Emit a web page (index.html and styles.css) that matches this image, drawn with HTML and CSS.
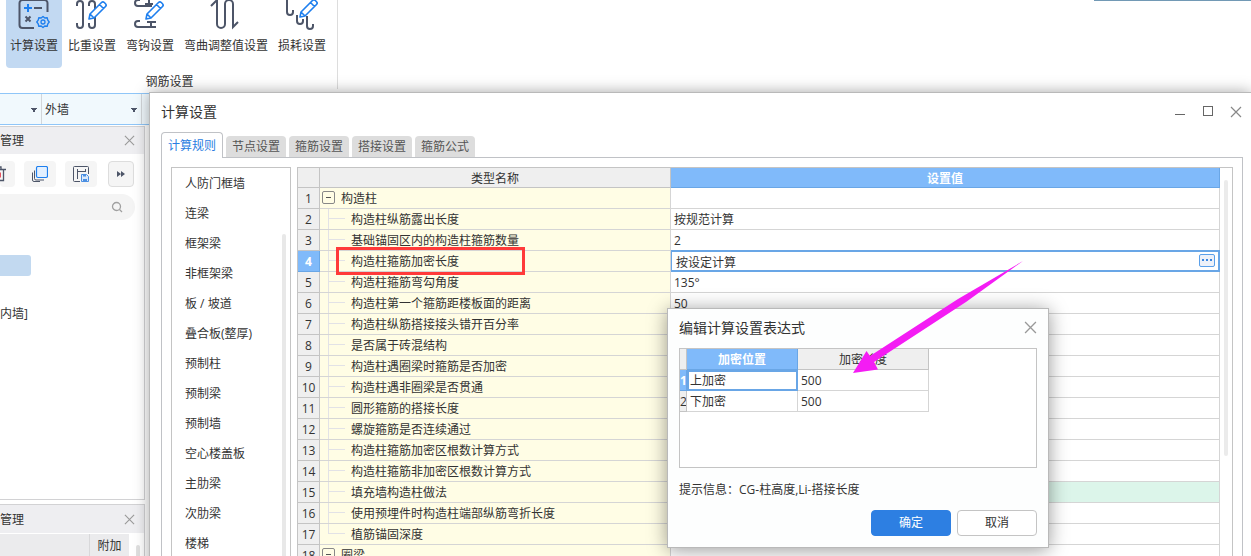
FILE: index.html
```html
<!DOCTYPE html>
<html lang="zh-CN">
<head>
<meta charset="utf-8">
<title>计算设置</title>
<link rel="stylesheet" href="styles.css">
</head>
<body>
<svg class="defs" aria-hidden="true">
  <symbol id="pencil" viewBox="0 0 32 32">
    <path d="M13 21l1-5L25.500 4.500a2 2 0 0 1 2.800 0l1.200 1.200a2 2 0 0 1 0 2.800L18 20zM23.500 6.500l4 4M14 16l4 4" fill="#fff" stroke="#1e7fee" stroke-width="1.600" stroke-linejoin="round"/>
  </symbol>
  <symbol id="close" viewBox="0 0 12 12">
    <path d="M1 1l10 10M11 1L1 11" fill="none" stroke="currentColor" stroke-width="1.200"/>
  </symbol>
</svg>
<div class="app">
  <header class="ribbon">
    <section class="group">
      <div class="tools">
        <button class="tool active"><svg class="tool-icon" viewBox="0 0 32 32"><path d="M29.500 14V5a3 3 0 0 0-3-3h-22a3 3 0 0 0-3 3v22a3 3 0 0 0 3 3H16" fill="none" stroke="#4d5568" stroke-width="2"/><path d="M6 10h8M10 6v8" stroke="#1e7fee" stroke-width="2"/><path d="M16 10h8M7.500 18.500l5 5M12.500 18.500l-5 5" stroke="#4d5568" stroke-width="2"/><path d="M25 18.500l1.800 1.500 2.400-.2.600 2.300 1.400 1.900-1.400 1.900-.6 2.300-2.400-.2-1.800 1.500-1.800-1.500-2.400.2-.6-2.300-1.400-1.900 1.400-1.900.6-2.300 2.400.2z" fill="none" stroke="#1e7fee" stroke-width="1.400" stroke-linejoin="round"/><circle cx="25" cy="24" r="2" fill="none" stroke="#1e7fee" stroke-width="1.300"/></svg><span>计算设置</span></button>
        <button class="tool"><svg class="tool-icon" viewBox="0 0 32 32"><path d="M1 8V6a3 3 0 0 1 6 0v21a3 3 0 0 1-6 0v-2M13 8V6a3 3 0 0 1 6 0v21a3 3 0 0 1-6 0v-2" fill="none" stroke="#4d5568" stroke-width="2"/><use href="#pencil"/></svg><span>比重设置</span></button>
        <button class="tool"><svg class="tool-icon" viewBox="0 0 32 32"><path d="M6 2H4a3 3 0 0 0 0 6h14M15 0v8M11 6h8M6 23H4a3 3 0 0 0 0 6h18M17 24v5M13 24h9" fill="none" stroke="#4d5568" stroke-width="2"/><use href="#pencil" x="-1"/></svg><span>弯钩设置</span></button>
        <button class="tool"><svg class="tool-icon" viewBox="0 0 32 32"><path d="M1 8l6-6v24a4 4 0 0 0 8 0V6a4 4 0 0 1 8 0v23l5-5" fill="none" stroke="#4d5568" stroke-width="2"/></svg><span>弯曲调整值设置</span></button>
        <button class="tool"><svg class="tool-icon" viewBox="0 0 32 32"><path d="M1 1v13a3 3 0 0 0 6 0v-2M11 17v6a3 3 0 0 0 6 0v-2M21 18v10a3 3 0 0 0 6 0v-2" fill="none" stroke="#4d5568" stroke-width="2"/><use href="#pencil" x="1" y="-2"/></svg><span>损耗设置</span></button>
      </div>
      <div class="group-name">钢筋设置</div>
    </section>
    <div class="top-line"></div>
  </header>

  <div class="context-bar">
    <select class="combo narrow" aria-label="构件类型"><option></option></select>
    <select class="combo" aria-label="墙类型"><option>外墙</option></select>
  </div>

  <aside class="dock">
    <section class="pane grow">
      <header class="pane-head"><h2>管理</h2><button class="icon-btn" aria-label="关闭"><svg class="x-small"><use href="#close"/></svg></button></header>
      <div class="pane-tools">
        <button class="chip first" aria-label="删除"><svg class="chip-icon" viewBox="0 0 16 16"><path d="M0 3.500h16M5 3V1h6v2M2.500 4v10.500h11V4" fill="none" stroke="#4d5568" stroke-width="1.300"/><path d="M6.500 6.500v5M10 6.500v5" stroke="#e02030" stroke-width="1.500"/></svg></button>
        <button class="chip" aria-label="复制"><svg class="chip-icon" viewBox="0 0 16 16"><path d="M2.500 4.500v8a1.500 1.500 0 0 0 1.500 1.500h8M.5 6.500V14a1.500 1.500 0 0 0 1.500 1.500h6" fill="none" stroke="#4d5568"/><rect x="4.500" y=".5" width="11" height="11" rx="1.500" fill="#e3f0ff" stroke="#1e7fee" stroke-width="1.200"/></svg></button>
        <button class="chip" aria-label="存档"><svg class="chip-icon" viewBox="0 0 16 16"><path d="M7 15.500H1.500a1 1 0 0 1-1-1v-13a1 1 0 0 1 1-1h13a1 1 0 0 1 1 1V8M4.500 3v10M4.500 5.500h8M12.500 3v3" fill="none" stroke="#4d5568"/><path d="M8.500 8.500h5l2 2v5h-7z" fill="#dbe9fb" stroke="#4b8fe2"/><path d="M10 8.500h3v2h-3zM10 13h4v2h-4z" fill="#4b8fe2"/></svg></button>
        <button class="chip more" aria-label="更多"><svg class="more-icon" viewBox="0 0 8 6"><path d="M0 0l4 3-4 3zM4 0l4 3-4 3z" fill="#4d5568"/></svg></button>
      </div>
      <div class="search"><input type="search" aria-label="搜索"><svg class="search-icon" viewBox="0 0 12 12"><circle cx="5.500" cy="5.500" r="4" fill="none" stroke="#a0a0a0" stroke-width="1.300"/><path d="M8.500 8.500l2.500 2.500" stroke="#a0a0a0" stroke-width="1.300"/></svg></div>
      <div class="picked"></div>
      <div class="node">内墙]</div>
    </section>
    <section class="pane second">
      <header class="pane-head"><h2>管理</h2><button class="icon-btn" aria-label="关闭"><svg class="x-small"><use href="#close"/></svg></button></header>
      <div class="columns"><span class="col-blank"></span><span class="col-extra">附加</span><span class="mini-bar"></span></div>
    </section>
  </aside>

  <div class="dialog" role="dialog" aria-labelledby="dlg-title">
    <header class="dialog-head">
      <h1 id="dlg-title">计算设置</h1>
      <button class="win-btn" aria-label="最小化"><svg class="win-icon" viewBox="0 0 12 12"><path d="M1 8.500h10" stroke="#666"/></svg></button>
      <button class="win-btn" aria-label="最大化"><svg class="win-icon" viewBox="0 0 12 12"><rect x="1.500" y=".5" width="9" height="9" fill="none" stroke="#666"/></svg></button>
      <button class="win-btn" aria-label="关闭"><svg class="win-icon"><use href="#close"/></svg></button>
    </header>
    <nav class="tabs">
      <button class="tab current">计算规则</button>
      <button class="tab">节点设置</button>
      <button class="tab">箍筋设置</button>
      <button class="tab">搭接设置</button>
      <button class="tab">箍筋公式</button>
    </nav>
    <div class="sheet">
      <div class="kinds">
        <ul>
          <li>人防门框墙</li><li>连梁</li><li>框架梁</li><li>非框架梁</li><li>板 / 坡道</li><li>叠合板(整厚)</li><li>预制柱</li><li>预制梁</li><li>预制墙</li><li>空心楼盖板</li><li>主肋梁</li><li>次肋梁</li><li>楼梯</li>
        </ul>
        <div class="kinds-bar"></div>
      </div>
      <div class="grid-frame">
        <table class="rules">
          <colgroup><col class="c-no"><col class="c-name"><col></colgroup>
          <thead><tr><th></th><th>类型名称</th><th class="picked-col">设置值</th></tr></thead>
          <tbody>
            <tr><th>1</th><td class="name"><div class="top"><button class="fold" aria-label="折叠"></button>构造柱</div></td><td></td></tr>
            <tr><th>2</th><td class="name"><div class="leaf">构造柱纵筋露出长度</div></td><td>按规范计算</td></tr>
            <tr><th>3</th><td class="name"><div class="leaf">基础锚固区内的构造柱箍筋数量</div></td><td>2</td></tr>
            <tr class="active-row"><th>4</th><td class="name"><div class="leaf">构造柱箍筋加密长度</div><div class="mark"></div></td><td class="edit"><div class="editor"><input type="text" value="按设定计算" aria-label="设置值"><button class="dots" aria-label="编辑"><i></i><i></i><i></i></button></div></td></tr>
            <tr><th>5</th><td class="name"><div class="leaf">构造柱箍筋弯勾角度</div></td><td>135°</td></tr>
            <tr><th>6</th><td class="name"><div class="leaf">构造柱第一个箍筋距楼板面的距离</div></td><td>50</td></tr>
            <tr><th>7</th><td class="name"><div class="leaf">构造柱纵筋搭接接头错开百分率</div></td><td></td></tr>
            <tr><th>8</th><td class="name"><div class="leaf">是否属于砖混结构</div></td><td></td></tr>
            <tr><th>9</th><td class="name"><div class="leaf">构造柱遇圈梁时箍筋是否加密</div></td><td></td></tr>
            <tr><th>10</th><td class="name"><div class="leaf">构造柱遇非圈梁是否贯通</div></td><td></td></tr>
            <tr><th>11</th><td class="name"><div class="leaf">圆形箍筋的搭接长度</div></td><td></td></tr>
            <tr><th>12</th><td class="name"><div class="leaf">螺旋箍筋是否连续通过</div></td><td></td></tr>
            <tr><th>13</th><td class="name"><div class="leaf">构造柱箍筋加密区根数计算方式</div></td><td></td></tr>
            <tr><th>14</th><td class="name"><div class="leaf">构造柱箍筋非加密区根数计算方式</div></td><td></td></tr>
            <tr><th>15</th><td class="name"><div class="leaf">填充墙构造柱做法</div></td><td class="green"></td></tr>
            <tr><th>16</th><td class="name"><div class="leaf">使用预埋件时构造柱端部纵筋弯折长度</div></td><td></td></tr>
            <tr><th>17</th><td class="name"><div class="leaf last">植筋锚固深度</div></td><td></td></tr>
            <tr><th>18</th><td class="name"><div class="top"><button class="fold" aria-label="折叠"></button>圈梁</div></td><td></td></tr>
          </tbody>
        </table>
        <div class="grid-bar"></div>
      </div>
    </div>
  </div>

  <div class="modal" role="dialog" aria-labelledby="modal-title">
    <header class="modal-head"><h2 id="modal-title">编辑计算设置表达式</h2><button class="icon-btn" aria-label="关闭"><svg class="x-big"><use href="#close"/></svg></button></header>
    <div class="expr-frame">
      <table class="expr">
        <colgroup><col class="e-no"><col class="e-pos"><col class="e-len"></colgroup>
        <thead><tr><th></th><th class="picked-col">加密位置</th><th>加密长度</th></tr></thead>
        <tbody>
          <tr class="active-row"><th>1</th><td class="focus">上加密</td><td>500</td></tr>
          <tr><th>2</th><td>下加密</td><td>500</td></tr>
        </tbody>
      </table>
    </div>
    <p class="hint">提示信息：CG-柱高度,Li-搭接长度</p>
    <div class="actions"><button class="btn primary">确定</button><button class="btn">取消</button></div>
  </div>

  <svg class="arrow" viewBox="0 0 170 112" aria-hidden="true"><path d="M170 0L105 38 17 95 13.500 90 0 112l25-3.500-4-7.500 92-60z" fill="#f41cf4"/></svg>
</div>
</body>
</html>
```
FILE: styles.css
```css
* { box-sizing: border-box; }
body {
  margin: 0;
  font: 12px/18px "Open Sans", "Noto Sans CJK SC", sans-serif;
  color: #333;
  background: #fff;
}
button, input, select { font: inherit; color: inherit; margin: 0; }
button { padding: 0; border: 0; background: none; }
h1, h2, p, ul { margin: 0; padding: 0; font-size: 12px; font-weight: 400; }
ul { list-style: none; }
.defs { position: absolute; width: 0; height: 0; }
.app {
  position: relative;
  height: 100vh;
  overflow: hidden;
  display: flex;
  flex-direction: column;
}

/* Ribbon */
.ribbon {
  flex: none;
  height: 93px;
  display: flex;
  justify-content: space-between;
  align-items: flex-start;
}
.group {
  height: 89px;
  width: 338px;
  padding-left: 6px;
  border-right: 1px solid #ddd;
}
.tools { display: flex; gap: 2px; margin-top: -4px; }
.tool {
  height: 72px;
  padding: 2px 4px 0;
  border-radius: 4px;
  display: flex;
  flex-direction: column;
  align-items: center;
  gap: 7px;
  white-space: nowrap;
}
.tool.active { background: #c2d9f2; }
.tool-icon { width: 32px; height: 32px; flex: none; display: block; }
.group-name { text-align: center; line-height: 18px; margin-top: 5px; padding-right: 4px; }
.top-line { width: 157px; height: 1px; background: #7299b5; }

.context-bar {
  flex: none;
  height: 32px;
  display: flex;
  background: #f1f9fd;
  border-top: 1px solid #8fc6f8;
  border-bottom: 1px solid #8fc6f8;
}
.combo {
  appearance: none;
  width: 100px;
  border: 0;
  border-right: 1px solid #d2d6da;
  border-radius: 0;
  padding: 2px 0 0 3px;
  background: linear-gradient(to bottom right, #4d5568 55%, transparent 55%) right 4px top 14px / 3px 4px no-repeat,
    linear-gradient(to bottom left, #4d5568 55%, transparent 55%) right 7px top 14px / 3px 4px no-repeat;
}
.combo.narrow { width: 42px; }

/* Docked panes */
.dock {
  width: 145px;
  flex: 1;
  min-height: 0;
  display: flex;
  flex-direction: column;
  gap: 4px;
  padding-top: 1px;
}
.pane { border: 1px solid #d2d2d4; border-left: 0; background: #fff; }
.pane.grow { flex: 1; }
.pane.second { height: 52px; border-bottom: 0; overflow: hidden; }
.pane-head {
  height: 27px;
  display: flex;
  align-items: center;
  justify-content: space-between;
  padding-right: 9px;
  background: #eeeef1;
}
.second .pane-head { height: 28px; padding-top: 1px; }
.icon-btn { display: flex; color: #999; }
.x-small { width: 11px; height: 11px; }
.x-big { width: 13px; height: 13px; }
.pane-tools { display: flex; gap: 9px; padding-top: 7px; }
.chip {
  width: 32px;
  height: 26px;
  border-radius: 4px;
  background: #f5f5f5;
  display: flex;
  align-items: center;
  justify-content: center;
}
.chip.first { width: 15px; justify-content: flex-end; padding-right: 9px; }
.chip.more { width: 26px; margin-left: 2px; border: 1px solid #ddd; }
.chip-icon { width: 16px; height: 16px; flex: none; }
.more-icon { width: 8px; height: 6px; }
.search {
  height: 26px;
  width: 135px;
  margin-top: 7px;
  border-radius: 0 13px 13px 0;
  background: #f4f4f4;
  display: flex;
  align-items: center;
  padding-right: 12px;
}
.search input { flex: 1; min-width: 0; border: 0; background: none; }
.search-icon { width: 12px; height: 12px; }
.picked { width: 31px; height: 21px; margin-top: 35px; border-radius: 0 3px 3px 0; background: #c2d9f0; }
.node { margin-top: 29px; }
.columns { display: flex; padding-top: 1px; }
.columns > span { height: 24px; line-height: 24px; background: #ebebed; }
.columns .col-blank { width: 90px; border-right: 1px solid #d8d8da; }
.columns .col-extra { width: 39px; text-align: center; }
.columns .mini-bar { width: 4px; margin: 11px 0 0 7px; border-radius: 2px; background: #e0e0e0; }

/* Settings window */
.dialog {
  position: absolute;
  left: 149px;
  right: 0;
  top: 92px;
  bottom: -20px;
  display: flex;
  flex-direction: column;
  background: #fff;
  border: 1px solid #b9b9b9;
  border-right: 0;
  box-shadow: 0 0 14px rgba(0, 0, 0, .35);
}
.dialog-head { height: 39px; display: flex; align-items: center; padding: 0 1px 2px 11px; }
.dialog-head h1 { flex: 1; font-size: 14px; }
.win-btn { width: 28px; height: 28px; display: flex; align-items: center; justify-content: center; color: #888; }
.win-icon { width: 12px; height: 12px; }
.tabs { display: flex; align-items: flex-end; gap: 3px; padding-left: 11px; }
.tab {
  width: 60px;
  height: 21px;
  border-radius: 4px 4px 0 0;
  background: #ddd;
  color: #555;
}
.tab.current {
  width: 62px;
  height: 26px;
  margin-bottom: -1px;
  z-index: 1;
  border: 1px solid #c0c2c6;
  border-bottom: 0;
  background: #fff;
  color: #2a7de1;
}
.sheet {
  flex: 1;
  min-height: 0;
  margin: 0 8px 0 11px;
  padding: 9px 9px 0;
  border: 1px solid #c0c2c6;
  display: flex;
  gap: 6px;
}
.kinds {
  width: 120px;
  flex: none;
  border: 1px solid #c4c4c4;
  display: flex;
  justify-content: space-between;
  overflow: hidden;
}
.kinds ul { padding-top: 1px; }
.kinds li { height: 30px; line-height: 30px; padding-left: 13px; white-space: nowrap; }
.kinds-bar { width: 4px; margin: 66px 4px 0 0; border-radius: 2px; background: #e8e8e8; }
.grid-frame {
  flex: 1;
  min-width: 0;
  border: 1px solid #c4c4c4;
  display: flex;
}
.grid-bar { flex: none; width: 4px; height: 276px; margin: 12px 4px 0; border-radius: 2px; background: #ebebeb; }

table { border-collapse: separate; border-spacing: 0; table-layout: fixed; }
th, td { height: 21px; padding: 2px 0 0; line-height: 18px; border: 0 solid #d5d5d5; border-width: 0 1px 1px 0; font-weight: 400; }
th { background: #efefef; border-color: #c4c4c4; text-align: center; }
td { padding-left: 3px; background: #fff; white-space: nowrap; }
thead th { height: 20px; line-height: 17px; }
.picked-col { background: #80bafa; color: #fff; font-weight: 700; border-color: #69a6e6; }
.active-row th { background: #80bafa; color: #fff; font-weight: 700; border-color: #69a6e6; }
.rules { flex: 1; min-width: 0; height: 0; }
.c-no { width: 22px; }
.c-name { width: 351px; }
.name { position: relative; padding: 0; background: #fffde5; }
.top { display: flex; padding: 2px 0 0 2px; gap: 6px; height: 20px; }
.fold {
  width: 13px;
  height: 13px;
  margin-top: 1px;
  border: 1px solid #888;
  border-radius: 2px;
  background: linear-gradient(#555, #555) center / 5px 1px no-repeat;
}
.leaf {
  height: 20px;
  padding: 2px 0 0 31px;
  background: linear-gradient(#e2e2e6, #e2e2e6) 8px 0 / 1px 100% no-repeat,
    linear-gradient(#e2e2e6, #e2e2e6) 8px 9px / 17px 1px no-repeat;
}
.leaf.last { background-size: 1px 10px, 17px 1px; }
.mark { position: absolute; left: 16px; top: -4px; width: 189px; height: 28px; border: 3px solid #ff3a3a; z-index: 1; }
.edit { padding: 0; }
.editor { display: flex; align-items: center; height: 20px; padding: 0 4px 0 5px; outline: 2px solid #69a6e6; outline-offset: -1px; }
.editor input { flex: 1; min-width: 0; height: 20px; padding: 2px 0 0; border: 0; outline: 0; background: none; }
.dots {
  width: 16px;
  height: 13px;
  margin-bottom: 1px;
  display: flex;
  justify-content: center;
  gap: 2px;
  padding-top: 4px;
  border: 1px solid #5aa0ea;
  border-radius: 2px;
  background: #edf1f9;
}
.dots i { width: 2px; height: 2px; background: #3a86e0; }
.green { background: #dcf5ea; }

/* Expression editor */
.modal {
  position: absolute;
  left: 667px;
  top: 308px;
  width: 382px;
  padding: 0 11px 11px;
  background: #fdfefe;
  border: 1px solid #b9b9b9;
  box-shadow: 0 2px 18px rgba(0, 0, 0, .4);
}
.modal-head { height: 39px; display: flex; align-items: center; justify-content: space-between; padding-bottom: 2px; }
.modal-head h2 { font-size: 14px; }
.expr-frame { height: 120px; border: 1px solid #c4c4c4; background: #fff; }
.expr { width: 249px; }
.e-no { width: 7px; }
.e-pos { width: 111px; }
.e-len { width: 131px; }
.expr thead th { height: 21px; line-height: 18px; }
.expr tbody th { overflow: hidden; }
.focus { outline: 2px solid #69a6e6; outline-offset: -2px; }
.hint { margin-top: 13px; }
.actions { display: flex; justify-content: flex-end; gap: 6px; margin-top: 11px; }
.btn { width: 80px; height: 26px; border: 1px solid #c4c4c4; border-radius: 4px; background: #fff; }
.btn.primary { background: #2d7fe2; border-color: #2d7fe2; color: #fff; }
.arrow { position: absolute; left: 853px; top: 261px; width: 170px; height: 112px; }
```
